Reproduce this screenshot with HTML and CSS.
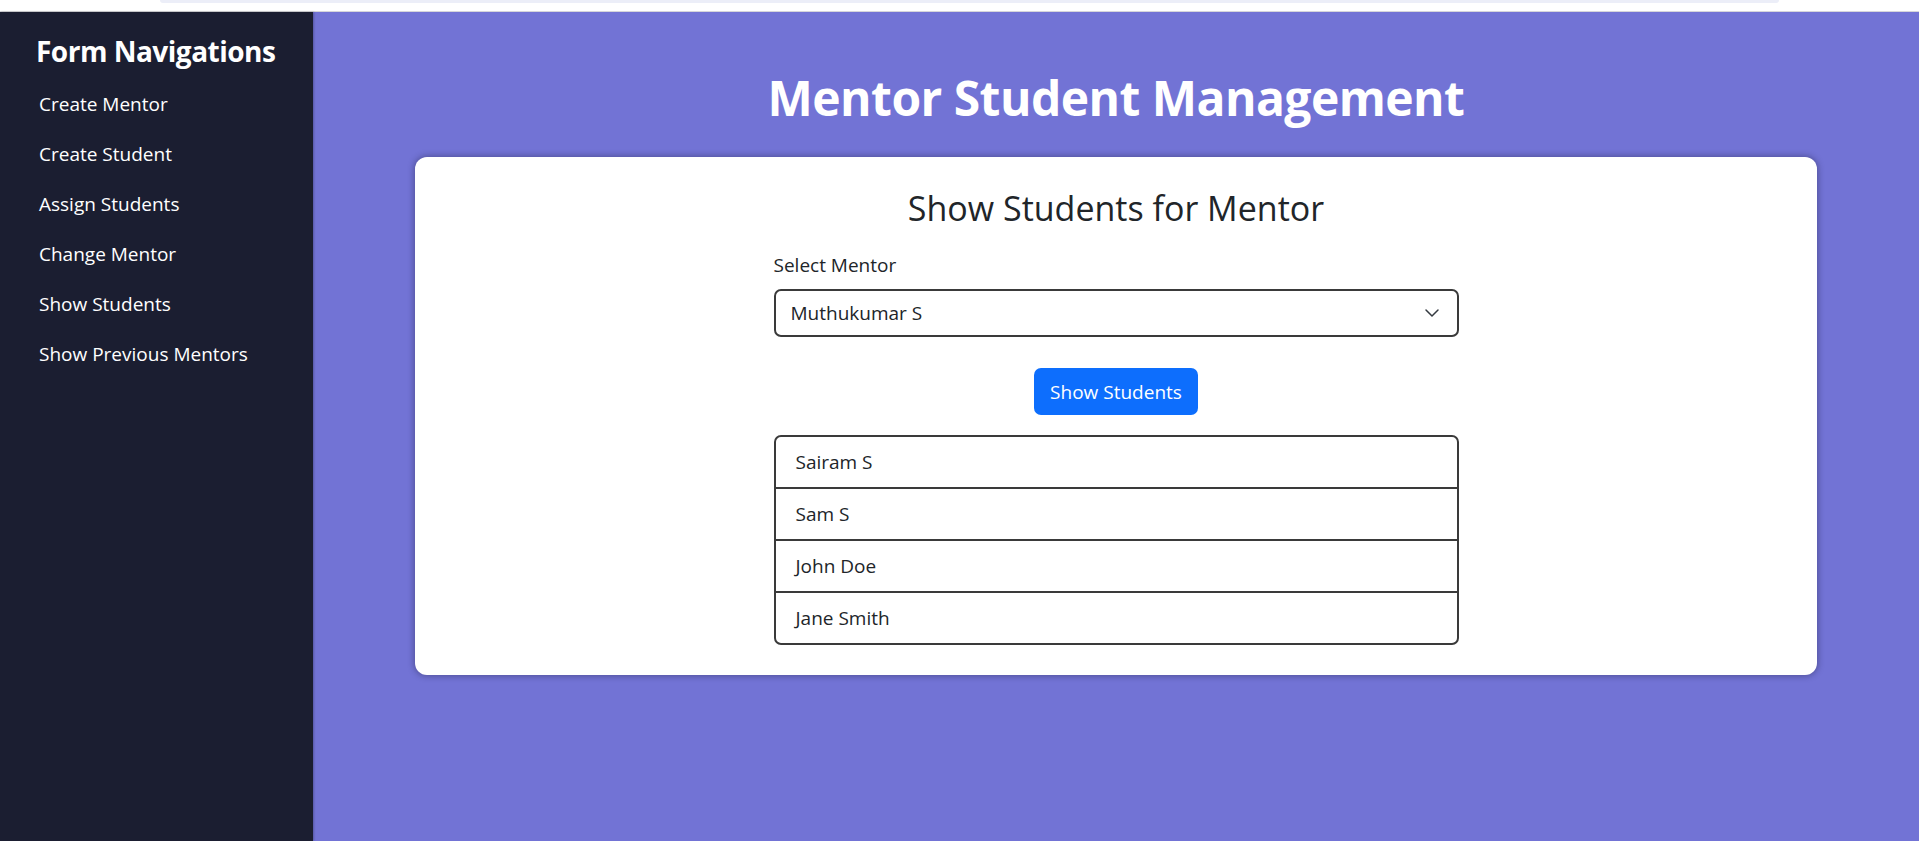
FILE: index.html
```html
<!DOCTYPE html>
<html lang="en">
<head>
<meta charset="utf-8">
<title>Mentor Student Management</title>
<link rel="stylesheet" href="styles.css">
</head>
<body>
<div class="topbar"><div class="topbar-tab"></div></div>
<div class="layout">
  <aside class="sidebar">
    <h2 class="sidebar-title">Form Navigations</h2>
    <nav class="nav">
      <a class="nav-link" href="#">Create Mentor</a>
      <a class="nav-link" href="#">Create Student</a>
      <a class="nav-link" href="#">Assign Students</a>
      <a class="nav-link" href="#">Change Mentor</a>
      <a class="nav-link" href="#">Show Students</a>
      <a class="nav-link" href="#">Show Previous Mentors</a>
    </nav>
  </aside>
  <main class="main">
    <h1 class="page-title">Mentor Student Management</h1>
    <section class="card">
      <h3 class="card-title">Show Students for Mentor</h3>
      <div class="form">
        <label class="form-label">Select Mentor</label>
        <div class="select" role="combobox">
          <span>Muthukumar S</span>
          <svg class="chevron" width="16" height="10" viewBox="0 0 16 10"><path d="M2 2 L8 8 L14 2" fill="none" stroke="#343a40" stroke-width="1.5" stroke-linecap="round" stroke-linejoin="round"/></svg>
        </div>
        <div class="btn-row"><button class="btn" type="button">Show Students</button></div>
        <ul class="list">
          <li class="list-item">Sairam S</li>
          <li class="list-item">Sam S</li>
          <li class="list-item">John Doe</li>
          <li class="list-item">Jane Smith</li>
        </ul>
      </div>
    </section>
  </main>
</div>
</body>
</html>
```
FILE: styles.css
```css
* { box-sizing: border-box; }
html, body { margin: 0; height: 100%; }
body {
  font-family: "Open Sans", "Noto Sans", sans-serif;
  background: #fff;
  overflow: hidden;
}
.topbar {
  height: 12px;
  background: #fff;
  border-bottom: 1px solid #d6d6da;
  padding: 0 140px 0 160px;
}
.topbar-tab {
  height: 3px;
  background: #eceef8;
  border-radius: 0 0 8px 8px;
}
.layout {
  display: flex;
  height: calc(100vh - 12px);
}
.sidebar {
  width: 313px;
  flex: none;
  background: #1b1e31;
  padding-top: 22px;
  color: #fff;
  box-shadow: 1px 0 2px rgba(0, 0, 0, 0.25);
  position: relative;
  z-index: 1;
}
.sidebar-title {
  margin: 0 0 11px;
  padding-left: 36px;
  font-size: 28px;
  line-height: 34px;
  font-weight: 700;
  letter-spacing: -0.5px;
}
.nav { display: flex; flex-direction: column; }
.nav-link {
  padding: 10px 39px;
  font-size: 19px;
  line-height: 30px;
  color: #fff;
  text-decoration: none;
}
.main {
  flex: 1;
  background: #7273d5;
  padding: 57px 102px 0;
}
.page-title {
  margin: 0 0 30px;
  text-align: center;
  color: #fff;
  font-size: 48px;
  line-height: 58px;
  font-weight: 700;
  letter-spacing: -0.55px;
}
.card {
  background: #fff;
  border-radius: 12px;
  padding: 30px;
  box-shadow: 0 0 6px 1px rgba(30, 30, 60, 0.4);
}
.card-title {
  margin: 0 0 21px;
  text-align: center;
  font-size: 34px;
  line-height: 42px;
  font-weight: 400;
  color: #212529;
}
.form { width: 685px; margin: 0 auto; }
.form-label {
  display: block;
  font-size: 19px;
  line-height: 30px;
  margin-bottom: 9px;
  color: #212529;
}
.select {
  display: flex;
  align-items: center;
  justify-content: space-between;
  height: 48px;
  border: 2px solid #3a3a3a;
  border-radius: 7px;
  padding: 0 17px 0 15px;
  font-size: 19px;
  color: #212529;
}
.chevron { display: block; }
.btn-row {
  display: flex;
  justify-content: center;
  margin: 31px 0 20px;
}
.btn {
  background: #0d6efd;
  color: #fff;
  border: 0;
  border-radius: 7px;
  font-family: inherit;
  font-size: 19px;
  line-height: 30px;
  padding: 8.5px 16px;
}
.list {
  list-style: none;
  margin: 0;
  padding: 0;
  border: 2px solid #3a3a3a;
  border-radius: 7px;
}
.list-item {
  padding: 10px 20px;
  font-size: 19px;
  line-height: 30px;
  color: #212529;
}
.list-item + .list-item { border-top: 2px solid #3a3a3a; }
```
